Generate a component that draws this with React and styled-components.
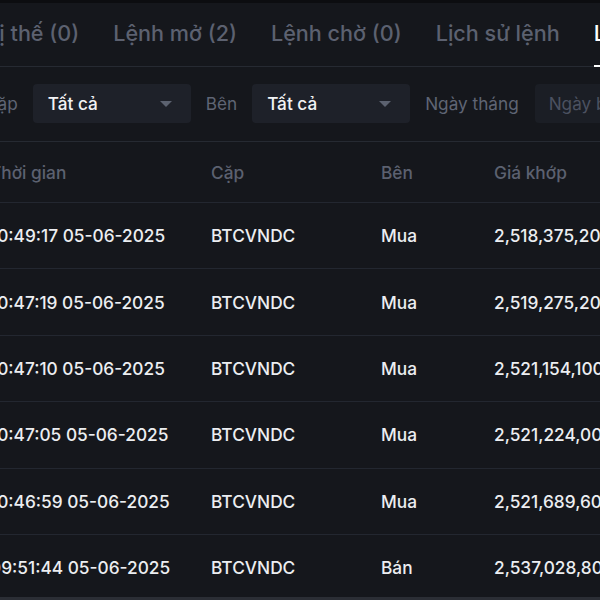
import React from "react";
import styled, { createGlobalStyle } from "styled-components";

const Global = createGlobalStyle`
  html, body { margin: 0; padding: 0; background: #15171c; }
  body { font-family: Inter, "Noto Sans", sans-serif; }
`;

const Viewport = styled.div`
  width: 600px;
  height: 600px;
  overflow: hidden;
  background: #15171c;
  border-top: 3px solid #0c0d10;
  box-sizing: border-box;
  position: relative;
`;

const Shift = styled.div`
  margin-left: -13px;
  width: 900px;
`;

const Tabs = styled.div`
  display: flex;
  gap: 34px;
  height: 63px;
  border-bottom: 1px solid #262a32;
  margin-left: -3px;
`;

const Tab = styled.div`
  font-size: 21.6px;
  font-weight: 500;
  color: ${p => (p.$active ? "#ffffff" : "#5c6170")};
  display: flex;
  align-items: center;
  padding-bottom: 4px;
  box-sizing: border-box;
  position: relative;
  white-space: nowrap;
  ${p => p.$active && `
    &::after {
      content: "";
      position: absolute;
      left: 0; right: 0; bottom: -1px;
      height: 2px;
      background: #ffffff;
    }
  `}
`;

const Filters = styled.div`
  display: flex;
  align-items: center;
  height: 73px;
  border-bottom: 1px solid #262a32;
  padding-bottom: 1px;
  box-sizing: content-box;
  margin-left: -2px;
`;

const FilterLabel = styled.span`
  font-size: 17.2px;
  color: #5f6574;
  margin-right: 15px;
  white-space: nowrap;
`;

const Select = styled.div`
  width: 158px;
  height: 39px;
  background: #1e2129;
  border-radius: 4px;
  display: flex;
  align-items: center;
  justify-content: space-between;
  padding: 0 19px 0 15px;
  box-sizing: border-box;
  margin-right: 15px;
  font-size: 17.2px;
  font-weight: 500;
  color: #f2f3f5;
`;

const Caret = styled.span`
  width: 0;
  height: 0;
  border-left: 6px solid transparent;
  border-right: 6px solid transparent;
  border-top: 6px solid #5c6270;
`;

const DateInput = styled.div`
  width: 150px;
  height: 39px;
  background: #1b1e25;
  border-radius: 4px;
  display: flex;
  align-items: center;
  padding: 0 14px;
  box-sizing: border-box;
  font-size: 17.2px;
  color: #4b5160;
  margin-left: 1px;
  white-space: nowrap;
`;

const Row = styled.div`
  display: grid;
  grid-template-columns: 221px 170px 113px 1fr;
  align-items: center;
  height: ${p => (p.$head ? "60px" : "65.4px")};
  border-bottom: 1px solid #232730;
  padding-left: 3px;
  font-size: 17.3px;
  font-weight: 500;
  color: ${p => (p.$head ? "#5c6170" : "#eceef1")};
  white-space: nowrap;
`;

const Cell = styled.div``;

const BottomLine = styled.div`
  position: absolute;
  left: 0; right: 0; bottom: 0;
  height: 3px;
  background: #2b2e35;
`;

const rows = [
  ["10:49:17 05-06-2025", "BTCVNDC", "Mua", "2,518,375,200"],
  ["10:47:19 05-06-2025", "BTCVNDC", "Mua", "2,519,275,200"],
  ["10:47:10 05-06-2025", "BTCVNDC", "Mua", "2,521,154,100"],
  ["10:47:05 05-06-2025", "BTCVNDC", "Mua", "2,521,224,000"],
  ["10:46:59 05-06-2025", "BTCVNDC", "Mua", "2,521,689,600"],
  ["09:51:44 05-06-2025", "BTCVNDC", "Bán", "2,537,028,800"],
];

export default function App() {
  return (
    <>
      <Global />
      <Viewport>
        <Shift>
          <Tabs>
            <Tab>Vị thế (0)</Tab>
            <Tab>Lệnh mở (2)</Tab>
            <Tab>Lệnh chờ (0)</Tab>
            <Tab>Lịch sử lệnh</Tab>
            <Tab $active>Lịch sử giao dịch</Tab>
          </Tabs>
          <Filters>
            <FilterLabel>Cặp</FilterLabel>
            <Select>Tất cả<Caret /></Select>
            <FilterLabel>Bên</FilterLabel>
            <Select>Tất cả<Caret /></Select>
            <FilterLabel>Ngày tháng</FilterLabel>
            <DateInput>Ngày bắt đầu</DateInput>
          </Filters>
          <Row $head>
            <Cell>Thời gian</Cell>
            <Cell>Cặp</Cell>
            <Cell>Bên</Cell>
            <Cell>Giá khớp</Cell>
          </Row>
          {rows.map((r, i) => (
            <Row key={i}>
              {r.map((c, j) => <Cell key={j}>{c}</Cell>)}
            </Row>
          ))}
        </Shift>
        <BottomLine />
      </Viewport>
    </>
  );
}
